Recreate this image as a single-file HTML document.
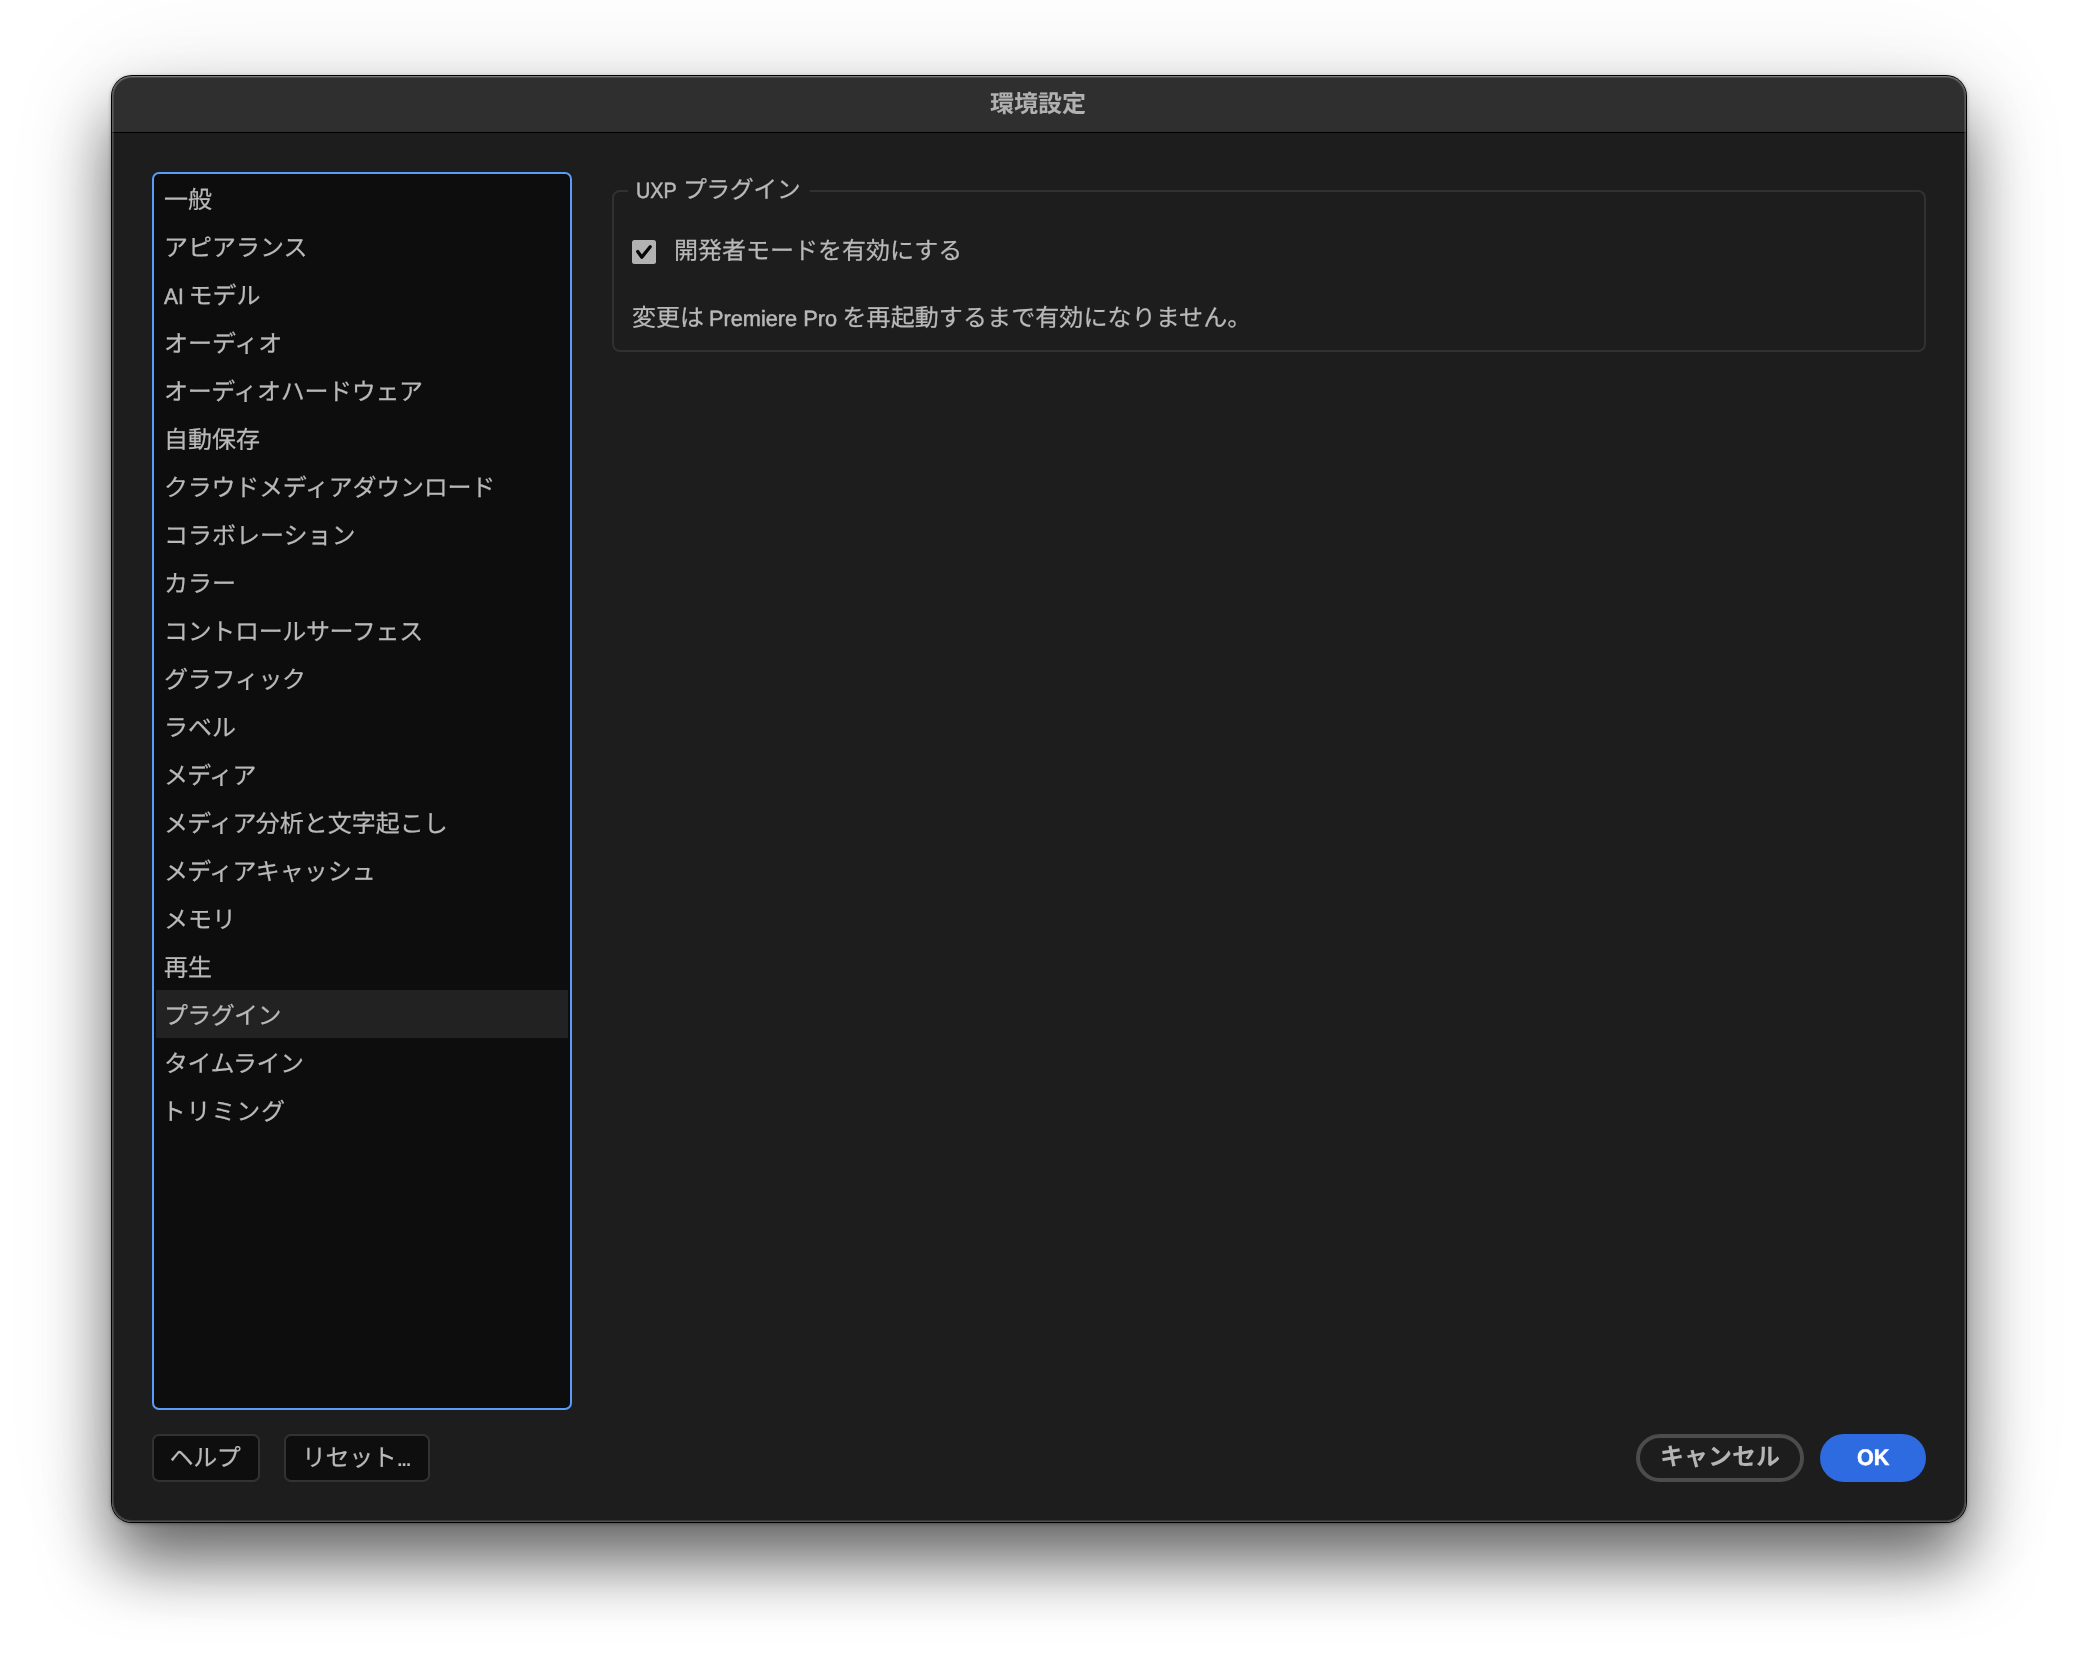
<!DOCTYPE html>
<html lang="ja">
<head>
<meta charset="utf-8">
<title>環境設定</title>
<style>
html,body{margin:0;padding:0;}
body{width:2078px;height:1670px;background:#fff;position:relative;
  font-family:"Liberation Sans","Noto Sans CJK JP",sans-serif;font-size:24px;color:#b9b9b9;text-rendering:geometricPrecision;-webkit-text-stroke:.22px #b9b9b9;}
.shadow{position:absolute;left:112px;top:76px;width:1854px;height:1446px;border-radius:20px;
  box-shadow:0 0 0 1px #000,0 1px 4px rgba(0,0,0,.5),0 40px 67px rgba(0,0,0,.594),0 0 119px rgba(0,0,0,.088);}
.win{position:absolute;left:112px;top:76px;width:1854px;height:1446px;border-radius:20px;
  background:#1d1d1d;overflow:hidden;will-change:transform;}
.win::after{content:"";position:absolute;inset:0;border-radius:20px;pointer-events:none;
  box-shadow:inset 0 0 0 1px rgba(255,255,255,.11),inset 0 0 0 2px rgba(255,255,255,.13),inset 0 1px 0 rgba(255,255,255,.18);}
.titlebar{position:absolute;left:0;top:0;width:100%;height:56px;background:#2f2f2f;border-bottom:1px solid #000;}
.title{position:absolute;left:-1px;top:0;width:100%;height:56px;line-height:57px;text-align:center;
  font-weight:700;font-size:24px;color:#b1b1b1;-webkit-text-stroke:0;}
.lat{font-size:22px;line-height:1;display:inline-block;transform-origin:0 50%;-webkit-text-stroke-width:.5px;}
.list{position:absolute;left:40px;top:96px;width:416px;height:1234px;border:2px solid #5a9df8;border-radius:7px;
  background:#0d0d0d;overflow:hidden;}
.list div{height:48px;line-height:53px;padding-left:10px;white-space:nowrap;}
.list div.sel{background:#222;margin:0 2px;padding-left:8px;}
.group{position:absolute;left:500px;top:114px;width:1310px;height:158px;border:2px solid #313131;border-radius:8px;}
.legend{position:absolute;left:516px;top:93px;height:44px;line-height:44px;padding:0 10px 0 8px;background:#1d1d1d;white-space:nowrap;}
.cb{position:absolute;left:520px;top:164px;width:24px;height:24px;border-radius:2.5px;background:#b2b2b2;}
.cb svg{position:absolute;left:0;top:0;}
.cblabel{position:absolute;left:562px;top:152px;height:48px;line-height:48px;white-space:nowrap;}
.note{position:absolute;left:520px;top:219px;height:48px;line-height:48px;white-space:nowrap;}
.btn{position:absolute;top:1358px;height:44px;line-height:46px;border:2px solid #323232;border-radius:7px;letter-spacing:-.4px;
  background:#0e0e0e;text-align:center;white-space:nowrap;}
.pill{position:absolute;top:1358px;height:48px;line-height:47px;border-radius:24px;text-align:center;
  font-weight:700;box-sizing:border-box;white-space:nowrap;-webkit-text-stroke:0;}
.cancel{left:1524px;width:168px;border:4px solid #4c4c4c;line-height:39px;color:#b4b4b4;}
.ok{left:1708px;width:106px;background:#2f6be0;color:#fff;}
</style>
</head>
<body>
<div class="shadow"></div>
<div class="win">
  <div class="titlebar"></div>
  <div class="title">環境設定</div>

  <div class="list">
    <div>一般</div>
    <div>アピアランス</div>
    <div><span class="lat" style="transform:scaleX(.95);margin-right:-3px">AI</span> モデル</div>
    <div>オーディオ</div>
    <div style="letter-spacing:-.32px">オーディオハードウェア</div>
    <div>自動保存</div>
    <div style="letter-spacing:-.23px">クラウドメディアダウンロード</div>
    <div>コラボレーション</div>
    <div>カラー</div>
    <div style="letter-spacing:-.34px">コントロールサーフェス</div>
    <div style="letter-spacing:-.28px">グラフィック</div>
    <div>ラベル</div>
    <div style="letter-spacing:-.63px">メディア</div>
    <div><span style="letter-spacing:-.63px">メディア</span>分析と文字起こし</div>
    <div><span style="letter-spacing:-.63px">メディア</span>キャッシュ</div>
    <div>メモリ</div>
    <div>再生</div>
    <div class="sel" style="letter-spacing:-.65px">プラグイン</div>
    <div style="letter-spacing:-.48px">タイムライン</div>
    <div style="letter-spacing:.85px;text-indent:-2.3px">トリミング</div>
  </div>

  <div class="group"></div>
  <div class="legend"><span class="lat" style="transform:scaleX(.9);margin-right:-5px">UXP</span> <span style="letter-spacing:-.55px">プラグイン</span></div>
  <div class="cb"><svg width="24" height="24" viewBox="0 0 24 24"><path d="M5.7 11.5 L9.85 17.15 L18.2 6.75" fill="none" stroke="#060606" stroke-width="3.3" stroke-linecap="round" stroke-linejoin="round"/></svg></div>
  <div class="cblabel">開発者モードを有効にする</div>
  <div class="note">変更は <span class="lat" style="transform:scaleX(.988);margin-left:-1.5px;margin-right:-3px">Premiere Pro</span> <span style="letter-spacing:.1px">を再起動するまで有効になりません。</span></div>

  <div class="btn" style="left:40px;width:102px;padding-right:2px;">ヘルプ</div>
  <div class="btn" style="left:172px;width:139.5px;padding-right:2.5px;">リセット<span style="letter-spacing:-2.3px">...</span></div>
  <div class="pill cancel">キャンセル</div>
  <div class="pill ok"><span class="lat" style="font-size:22.5px;transform:scaleX(.96);margin-right:-1.3px;-webkit-text-stroke:.5px #fff">OK</span></div>
</div>
</body>
</html>
